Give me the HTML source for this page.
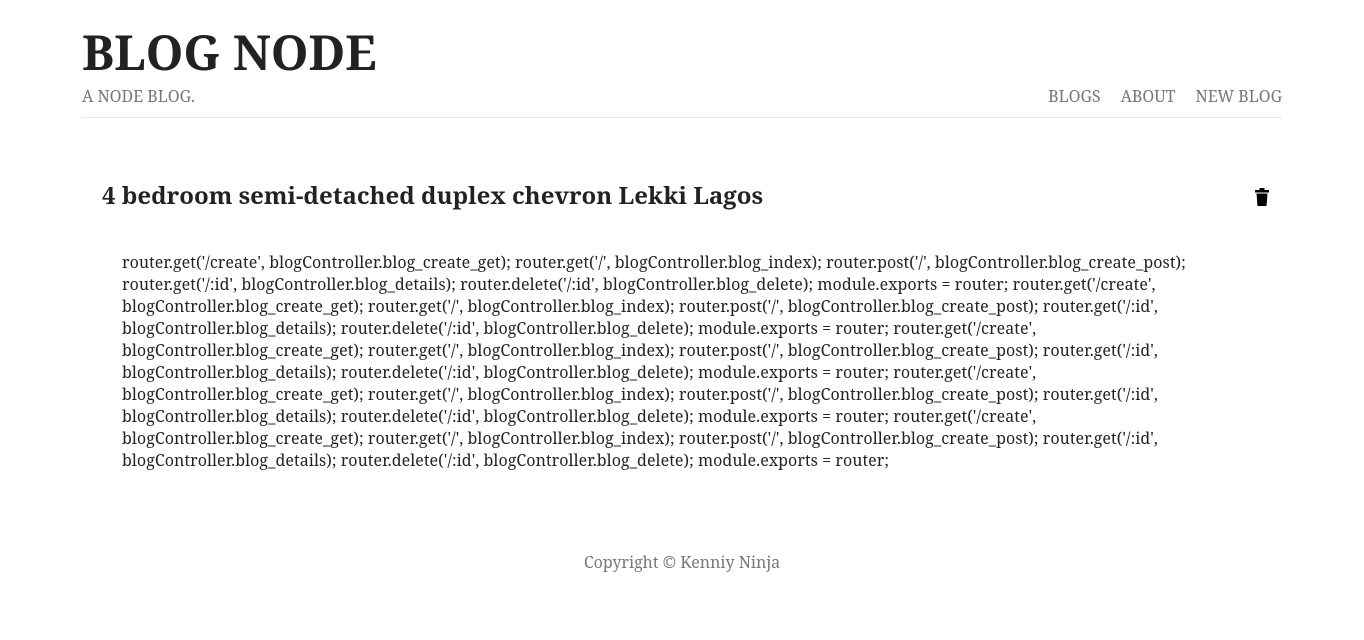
<!DOCTYPE html>
<html><head><meta charset="utf-8"><style>
body{margin:0;background:#fff;font-family:"Noto Serif","DejaVu Serif","Liberation Serif",serif;color:#222;}
.wrap{width:1200px;margin:0 auto;position:relative;}
h1{margin:0;position:absolute;top:25px;left:0;font-size:48px;font-weight:bold;line-height:56px;}
.sub{position:absolute;top:85px;left:0;font-size:16px;color:#777;}
nav{position:absolute;top:85px;right:0;font-size:16px;color:#777;}
nav span{margin-left:20px;}
.hr{position:absolute;top:117px;left:0;width:1200px;height:1px;background:#e5e5e5;}
h2{position:absolute;top:179px;left:20px;margin:0;font-size:24px;font-weight:bold;}
.trash{position:absolute;top:188px;left:1173px;}
.body{position:absolute;top:251px;left:40px;font-size:16px;line-height:22px;white-space:nowrap;letter-spacing:0.06px;}
.foot{position:absolute;top:551px;left:0;width:1200px;text-align:center;font-size:16px;color:#777;}
</style></head><body><div class="wrap">
<h1>BLOG NODE</h1>
<div class="sub">A NODE BLOG.</div>
<nav><span>BLOGS</span><span>ABOUT</span><span>NEW BLOG</span></nav>
<div class="hr"></div>
<h2>4 bedroom semi-detached duplex chevron Lekki Lagos</h2>
<svg class="trash" width="14" height="18" viewBox="0 0 14 18"><rect x="0" y="2" width="14" height="2.5" fill="#000"/><rect x="4.5" y="0" width="5" height="3" fill="#000"/><path d="M1.5 5.5h11l-1 12.5h-9z" fill="#000"/></svg>
<div class="body">router.get('/create', blogController.blog_create_get); router.get('/', blogController.blog_index); router.post('/', blogController.blog_create_post);<br>
router.get('/:id', blogController.blog_details); router.delete('/:id', blogController.blog_delete); module.exports = router; router.get('/create',<br>
blogController.blog_create_get); router.get('/', blogController.blog_index); router.post('/', blogController.blog_create_post); router.get('/:id',<br>
blogController.blog_details); router.delete('/:id', blogController.blog_delete); module.exports = router; router.get('/create',<br>
blogController.blog_create_get); router.get('/', blogController.blog_index); router.post('/', blogController.blog_create_post); router.get('/:id',<br>
blogController.blog_details); router.delete('/:id', blogController.blog_delete); module.exports = router; router.get('/create',<br>
blogController.blog_create_get); router.get('/', blogController.blog_index); router.post('/', blogController.blog_create_post); router.get('/:id',<br>
blogController.blog_details); router.delete('/:id', blogController.blog_delete); module.exports = router; router.get('/create',<br>
blogController.blog_create_get); router.get('/', blogController.blog_index); router.post('/', blogController.blog_create_post); router.get('/:id',<br>
blogController.blog_details); router.delete('/:id', blogController.blog_delete); module.exports = router;</div>
<div class="foot">Copyright © Kenniy Ninja</div>
</div></body></html>
